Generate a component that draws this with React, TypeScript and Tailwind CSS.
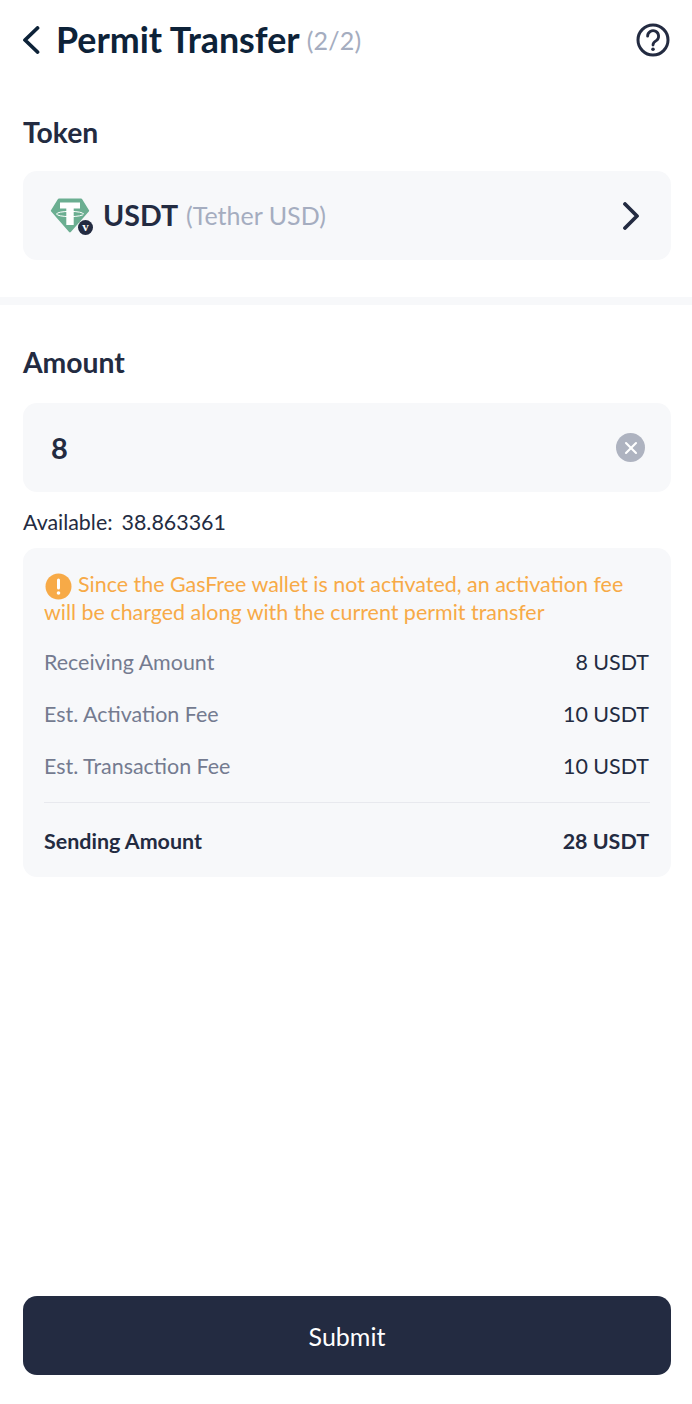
import { X } from 'lucide-react'

function Chevron({ dir, className }: { dir: 'left' | 'right'; className?: string }) {
  return (
    <svg width="20" height="28" viewBox="0 0 20 28" fill="none" className={className}>
      <path
        d={dir === 'left' ? 'M16.5 2 4 14l12.5 12' : 'M4 2 16 14 4 26'}
        stroke="currentColor"
        strokeWidth="3.8"
        strokeLinecap="round"
        strokeLinejoin="round"
      />
    </svg>
  )
}

function HelpIcon() {
  return (
    <svg width="36" height="36" viewBox="0 0 36 36" fill="none" className="text-[#232b41] shrink-0">
      <circle cx="18" cy="18" r="15" stroke="currentColor" strokeWidth="3" />
      <path d="M12.6 14.2a5.5 5.5 0 1 1 8.6 4.5c-2 1.3-3.2 2.2-3.2 4.3" stroke="currentColor" strokeWidth="2.8" strokeLinecap="round" />
      <circle cx="18" cy="27.2" r="1.8" fill="currentColor" />
    </svg>
  )
}

function WarnIcon() {
  return (
    <svg width="27" height="27" viewBox="0 0 27 27" className="inline-block align-[-4px] -my-[4px] ml-px mr-[6px]">
      <circle cx="13.5" cy="13.5" r="13" fill="#f7aa47" />
      <rect x="12" y="5.5" width="3" height="11" rx="1.5" fill="#fff" />
      <circle cx="13.5" cy="20" r="1.8" fill="#fff" />
    </svg>
  )
}

function TetherIcon() {
  return (
    <div className="relative w-[44px] h-[38px] shrink-0">
      <svg width="40" height="36" viewBox="0 0 40 36" className="absolute left-0 top-0">
        <path d="M9 1.5h22a1.5 1.5 0 0 1 1.2.7l6.8 11a1 1 0 0 1-.2 1.3L20.8 35a1.2 1.2 0 0 1-1.7 0L1.2 14.5a1 1 0 0 1-.2-1.3l6.8-11A1.5 1.5 0 0 1 9 1.5z" fill="#6bae91" />
        <path d="M10 5.5h20v6h-6.3v16.5h-7.4V11.5H10z" fill="#fff" />
        <ellipse cx="20" cy="17" rx="13.5" ry="2.6" fill="none" stroke="#fff" strokeWidth="1" />
      </svg>
      <div className="absolute left-[28px] top-[23px] w-[15px] h-[15px] rounded-full bg-[#232b41] flex items-center justify-center text-white text-[13px] leading-none font-['Liberation_Serif',serif] font-bold pb-px">
        v
      </div>
    </div>
  )
}

function FeeRow({ label, value }: { label: string; value: string }) {
  return (
    <div className="flex items-center justify-between h-[52px] text-[21.45px]">
      <span className="text-[#747b90]">{label}</span>
      <span className="text-[#232b41] pr-px">{value}</span>
    </div>
  )
}

export default function App() {
  return (
    <div className="w-[692px] h-[1404px] bg-white flex flex-col font-['Lato',sans-serif] text-[#232b41] antialiased">
      {/* Header */}
      <header className="flex items-center h-[80px] pl-[21px] pr-[21px] shrink-0">
        <Chevron dir="left" className="text-[#0d2238] shrink-0" />
        <h1 className="ml-[15px] text-[35.8px] font-bold text-[#0d2238] leading-none">Permit Transfer</h1>
        <span className="ml-[7px] text-[25px] text-[#a5adc0] leading-none tracking-[0.2px]">(2/2)</span>
        <div className="flex-1" />
        <HelpIcon />
      </header>

      {/* Token */}
      <section className="pl-[23px] pr-[21px] pt-[32px] pb-[37px]">
        <div className="text-[28.3px] font-bold leading-[40px]">Token</div>
        <div className="mt-[19px] h-[89px] rounded-[14px] bg-[#f7f8fa] flex items-center pl-[27px] pr-[30px]">
          <TetherIcon />
          <span className="ml-[10px] -translate-x-px text-[28.6px] font-bold">USDT</span>
          <span className="ml-[7px] text-[25px] text-[#a5adc0]">(Tether USD)</span>
          <div className="flex-1" />
          <Chevron dir="right" className="text-[#232b41] shrink-0" />
        </div>
      </section>

      <div className="h-[8px] bg-[#f7f8fa] shrink-0" />

      {/* Amount */}
      <section className="pl-[23px] pr-[21px] pt-[37px]">
        <div className="text-[28.3px] font-bold leading-[40px]">Amount</div>
        <div className="mt-[21px] h-[89px] rounded-[14px] bg-[#f7f8fa] flex items-center justify-between pl-[28px] pr-[26px]">
          <span className="text-[29px] font-bold">8</span>
          <div className="w-[29px] h-[29px] rounded-full bg-[#aeb3c0] flex items-center justify-center">
            <X size={20} strokeWidth={2.5} className="text-white" />
          </div>
        </div>
        <div className="mt-[17px] mb-[13px] text-[21.4px] leading-[26px] flex">
          <span>Available:</span>
          <span className="ml-[9px]">38.863361</span>
        </div>

        <div className="h-[329px] rounded-[14px] bg-[#f7f8fa] pl-[21px] pr-[21px] pt-[22px]">
          <div className="text-[21.45px] leading-[28px] text-[#f7aa47]">
            <WarnIcon />
            Since the GasFree wallet is not activated, an activation fee will be charged along with the current permit transfer
          </div>
          <div className="mt-[10px]">
            <FeeRow label="Receiving Amount" value="8 USDT" />
            <FeeRow label="Est. Activation Fee" value="10 USDT" />
            <FeeRow label="Est. Transaction Fee" value="10 USDT" />
          </div>
          <div className="h-px bg-[#e8e9ee] mt-[10px]" />
          <div className="flex items-center justify-between h-[77px] text-[21.45px] font-bold">
            <span>Sending Amount</span>
            <span className="pr-px">28 USDT</span>
          </div>
        </div>
      </section>

      <div className="flex-1" />

      {/* Submit */}
      <div className="pl-[23px] pr-[21px] pb-[29px]">
        <button className="w-full h-[79px] pt-[2px] rounded-[14px] bg-[#232b41] text-white text-[25px]">Submit</button>
      </div>
    </div>
  )
}
